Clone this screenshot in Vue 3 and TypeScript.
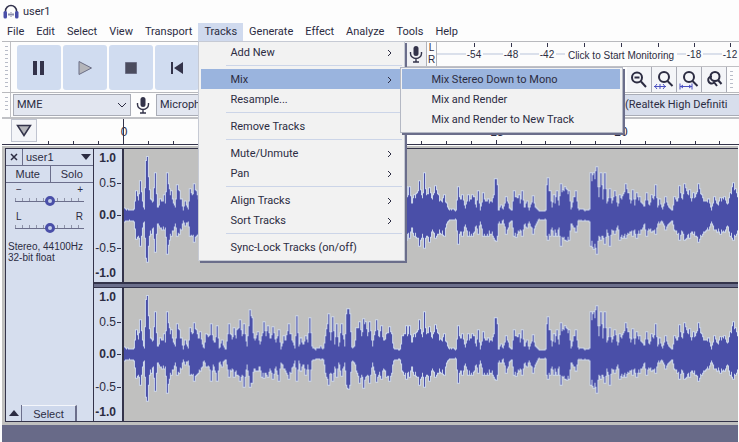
<script setup lang="ts">
import { ref } from 'vue'

interface Entry {
  label: string
  arrow?: boolean
  open?: boolean
}

const menusBefore = ['File', 'Edit', 'Select', 'View', 'Transport']
const menusAfter = ['Generate', 'Effect', 'Analyze', 'Tools', 'Help']

const trackMenu: Entry[][] = [
  [{ label: 'Add New', arrow: true }],
  [{ label: 'Mix', arrow: true, open: true }, { label: 'Resample...' }],
  [{ label: 'Remove Tracks' }],
  [{ label: 'Mute/Unmute', arrow: true }, { label: 'Pan', arrow: true }],
  [{ label: 'Align Tracks', arrow: true }, { label: 'Sort Tracks', arrow: true }],
  [{ label: 'Sync-Lock Tracks (on/off)' }],
]
const mixMenu = ['Mix Stereo Down to Mono', 'Mix and Render', 'Mix and Render to New Track']

const gain = ref(50)
const pan = ref(50)

const meterMarks = [
  { x: 37, label: '-54' },
  { x: 74, label: '-48' },
  { x: 110, label: '-42' },
  { x: 147, label: '' },
  { x: 184, label: '' },
  { x: 221, label: '' },
  { x: 257, label: '-18' },
  { x: 293, label: '-12' },
]

// Timeline: one tick per second, with a taller tick every five seconds
const secondWidth = 24.85
const labelled = [0, 15, 20]
const ticks = Array.from({ length: 28 }, (_, i) => i - 3).map((s) => ({
  x: Math.round(86 + s * secondWidth),
  major: s % 5 === 0,
  label: labelled.includes(s) ? String(s) : '',
}))

// Peak envelope: x, height above the axis, depth below the axis
const peaks = [
  124,7,6, 130,5,5, 134,6,6, 136,24,23, 138,15,20, 140,34,30, 142,14,12, 144,6,6, 146,54,42, 147,58,46, 149,25,20, 151,15,18,
  153,14,12, 155,42,36, 157,8,8, 159,10,10, 160,16,12, 162,14,14, 164,20,14, 165,12,12, 167,42,38, 169,26,24, 171,24,20, 173,12,15,
  175,8,8, 177,30,20, 179,24,18, 181,16,14, 183,5,5, 185,14,10, 188,6,6, 190,26,20, 192,20,20, 194,31,26, 196,24,20,
  198,16,18, 200,22,16, 202,10,12, 204,6,6, 206,20,12, 209,18,12, 211,30,26, 213,14,10, 215,12,16, 217,28,26, 219,6,8,
  222,14,12, 224,7,6, 226,5,5, 229,30,22, 232,15,14, 234,26,22, 236,16,16, 237,24,20, 240,34,26, 242,18,20, 244,30,32,
  247,8,10, 250,44,32, 252,36,28, 254,16,14, 256,16,16, 258,22,16, 260,10,12, 262,18,22, 264,32,23, 266,18,18, 268,28,22,
  271,16,16, 273,27,24, 276,12,12, 279,24,26, 281,5,8, 284,18,14, 286,14,16, 289,30,24, 291,20,18, 293,12,12, 295,6,6,
  297,38,26, 299,8,6, 301,16,16, 304,10,10, 306,18,20, 308,12,10, 310,36,26, 312,8,6, 315,5,5, 318,6,4, 321,8,5, 324,6,5,
  326,18,18, 329,40,30, 331,14,18, 333,37,26, 335,10,12, 337,30,22, 339,8,8, 342,30,21, 345,8,8, 347,40,30, 348,45,33,
  349,45,34, 350,40,30, 352,7,7, 355,8,8, 357,26,16, 360,32,28, 362,18,20, 364,35,33, 366,32,22, 368,18,20, 370,32,28,
  373,8,8, 377,34,27, 379,18,20, 382,28,24, 384,14,14, 387,20,22, 390,27,26, 392,20,18, 394,6,6, 398,5,5, 401,5,5,
  403,18,16, 405,20,20, 407,28,24, 408,18,18, 410,28,22, 412,12,12, 415,20,20, 418,22,22, 420,34,30, 422,20,22, 424,22,22,
  425,42,32, 427,20,20, 430,27,26, 433,16,14, 436,29,22, 439,20,18, 442,14,18, 445,20,20, 447,12,8, 449,6,5, 453,6,4,
  457,5,4, 459,28,28, 461,16,16, 463,20,20, 466,7,9, 469,20,20, 471,16,20, 473,20,20, 475,18,16, 477,8,10, 479,24,18,
  481,5,6, 484,22,20, 486,14,20, 489,16,20, 492,14,18, 495,20,22, 496,36,24, 497,36,25, 498,30,20, 499,5,8, 502,10,8,
  504,6,4, 507,18,18, 509,12,12, 511,6,6, 513,5,5, 515,24,20, 517,18,21, 520,20,16, 521,12,14, 523,24,20, 525,8,9,
  528,14,12, 530,5,6, 534,19,18, 536,8,10, 539,5,4, 543,4,4, 547,5,4, 548,30,20, 549,37,24, 551,24,20, 553,8,12,
  555,20,20, 556,12,14, 558,24,20, 560,10,12, 562,31,30, 564,25,22, 566,28,24, 568,25,25, 570,24,24, 572,6,8, 575,18,12,
  577,24,16, 579,7,5, 583,6,5, 587,5,5, 591,6,6, 592,42,30, 595,42,33, 596,36,28, 597,44,32, 598,48,38, 600,18,20,
  602,42,24, 603,30,20, 604,16,20, 606,42,28, 608,12,14, 611,26,30, 613,12,14, 616,24,18, 619,9,10, 621,20,24, 624,19,22,
  627,31,22, 630,22,18, 632,12,16, 634,25,20, 636,10,14, 638,22,22, 641,18,18, 643,12,14, 646,9,8, 648,22,20, 651,10,14,
  653,20,16, 655,16,15, 657,30,18, 659,8,8, 661,16,8, 664,6,6, 667,18,14, 670,8,8, 674,5,5, 676,18,14, 679,14,18,
  681,29,24, 684,16,16, 686,31,24, 688,24,22, 691,25,22, 693,14,16, 695,22,18, 697,18,20, 700,31,26, 703,20,20,
  706,14,16, 710,16,14, 713,5,6, 716,18,14, 719,11,16, 722,17,18, 726,18,16, 729,11,10, 732,22,20, 735,32,24, 740,18,16,
]

function buildWave(): string {
  const top: string[] = []
  const bottom: string[] = []
  for (let i = 0; i + 5 < peaks.length; i += 3) {
    const [x0, u0, d0, x1, u1, d1] = peaks.slice(i, i + 6)
    for (let x = x0; x < x1; x++) {
      const t = (x - x0) / (x1 - x0)
      const dip = x === x0 ? 1 : 0.8 + ((x * 37) % 10) / 50
      const up = Math.round((u0 + (u1 - u0) * t) * dip)
      const down = Math.round((d0 + (d1 - d0) * t) * dip)
      const px = x - 124
      top.push(`${px},${66 - up} ${px + 1},${66 - up}`)
      bottom.unshift(`${px + 1},${66 + down} ${px},${66 + down}`)
    }
  }
  return [...top, ...bottom].join(' ')
}
const wave = buildWave()
const channels = ['Left channel', 'Right channel']
const scale = ['1.0', '0.5', '0.0', '-0.5', '-1.0']
</script>

<template>
  <div class="window">
    <header class="title">
      <svg class="logo" viewBox="0 0 16 16" aria-hidden="true">
        <path d="M2.500 9V7a5.500 5.500 0 0 1 11 0v2" fill="none" stroke="#33334d" stroke-width="1.500" />
        <path d="M5 10.500h6M6 9v3M8 8v5M10 9v3" stroke="#8a8ca8" />
        <rect x="0.500" y="7" width="3.500" height="7.500" rx="1.500" fill="#4a4fa8" />
        <rect x="12" y="7" width="3.500" height="7.500" rx="1.500" fill="#4a4fa8" />
      </svg>
      <span>user1</span>
    </header>

    <nav class="menubar">
      <button v-for="m in menusBefore" :key="m" type="button">{{ m }}</button>
      <div class="holder">
        <button type="button" class="active">Tracks</button>
        <div class="menu">
          <ul v-for="(group, g) in trackMenu" :key="g">
            <li v-for="e in group" :key="e.label" :class="{ open: e.open }">
              <button type="button">
                <span>{{ e.label }}</span>
                <svg v-if="e.arrow" class="chev" viewBox="0 0 5 8" aria-hidden="true"><path d="M1 1l3 3-3 3" /></svg>
              </button>
              <div v-if="e.open" class="submenu">
                <button v-for="(m, i) in mixMenu" :key="m" type="button" :class="{ hot: i === 0 }">{{ m }}</button>
              </div>
            </li>
          </ul>
        </div>
      </div>
      <button v-for="m in menusAfter" :key="m" type="button">{{ m }}</button>
    </nav>

    <section class="tools">
      <div class="transport">
        <i class="grip"></i>
        <button type="button" aria-label="Pause">
          <svg viewBox="0 0 16 16"><path d="M2 1h4v14H2zM9 1h4v14H9z" fill="#33334a" /></svg>
        </button>
        <button type="button" aria-label="Play">
          <svg viewBox="0 0 16 16"><path d="M2 1.500v13L14.500 8z" fill="#b4b5ba" stroke="#6b6e85" /></svg>
        </button>
        <button type="button" aria-label="Stop">
          <svg viewBox="0 0 16 16"><path d="M2.500 2.500h11v11h-11z" fill="#4b4c5e" stroke="#6b6e85" /></svg>
        </button>
        <button type="button" aria-label="Skip to start">
          <svg viewBox="0 0 16 16"><path d="M2 2h2v12H2zM14 2v12L5 8z" fill="#33334a" /></svg>
        </button>
      </div>
      <div class="side">
        <div class="meter">
          <button type="button" class="mic" aria-label="Record meter">
            <svg viewBox="0 0 14 18"><rect x="4.500" y="1" width="5" height="10" rx="2.500" fill="#33334a" /><path d="M1.500 7v1.500a5.500 5 0 0 0 11 0V7M7 13.500V17M4 17h6" fill="none" stroke="#33334a" stroke-width="1.400" /></svg>
          </button>
          <div class="lr"><span>L</span><span>R</span></div>
          <svg class="scale" role="img" aria-label="Recording level">
            <line x1="0" x2="100%" y1="12" y2="12" stroke="#b9c4da" />
            <g v-for="m in meterMarks" :key="m.x">
              <rect :x="m.x" y="1" width="1" height="4" fill="#33334a" />
              <rect v-if="m.label" :x="m.x - 8" y="6" width="17" height="12" fill="#fcfcfc" />
              <text :x="m.x" y="16" text-anchor="middle">{{ m.label }}</text>
            </g>
            <rect x="128" y="6" width="112" height="12" fill="#fcfcfc" />
            <text x="184" y="17" text-anchor="middle">Click to Start Monitoring</text>
          </svg>
        </div>
        <div class="zooms">
          <button type="button" aria-label="Zoom out">
            <svg viewBox="0 0 20 20"><circle cx="8" cy="7.500" r="5" /><path d="M12 11.500l5 5.500M5.500 7.500h5" /></svg>
          </button>
          <button type="button" aria-label="Zoom to selection">
            <svg viewBox="0 0 20 20"><circle cx="10" cy="7" r="5" /><path d="M13.500 11l5 5" /><path class="blue" d="M0 16.500h12M3 14l-2 2.500L3 19M9 14l2 2.500L9 19M6 14v5" /></svg>
          </button>
          <button type="button" aria-label="Fit to width">
            <svg viewBox="0 0 20 20"><circle cx="10" cy="7" r="5" /><path d="M13.500 11l5 5" /><path class="blue" d="M1 16.500h12M1 13.500v6M13 13.500v6M4 15l-2 1.500L4 18M10 15l2 1.500L10 18" /></svg>
          </button>
          <button type="button" aria-label="Zoom toggle">
            <svg viewBox="0 0 20 20"><circle cx="11" cy="6.500" r="4.500" /><path d="M14 10l3.500 4" /><path d="M8 6.500a3.500 3.500 0 1 0 1.500 6.500M9.500 11.500l3.500 4.500" /></svg>
          </button>
          <i class="grip"></i>
        </div>
      </div>
    </section>

    <section class="devices">
      <i class="grip"></i>
      <div class="pick host">
        <select aria-label="Audio host"><option>MME</option></select>
        <svg viewBox="0 0 10 6" aria-hidden="true"><path d="M1 1l4 4 4-4" /></svg>
      </div>
      <svg class="micicon" viewBox="0 0 14 18" aria-hidden="true"><rect x="4.500" y="1" width="5" height="10" rx="2.500" fill="#33334a" /><path d="M1.500 7v1.500a5.500 5 0 0 0 11 0V7M7 13.500V17M4 17h6" fill="none" stroke="#33334a" stroke-width="1.400" /></svg>
      <div class="pick input"><select aria-label="Recording device"><option>Microph</option></select></div>
      <div class="pick output"><select aria-label="Playback device"><option>(Realtek High Definiti</option></select></div>
    </section>

    <section class="timeline">
      <button type="button" aria-label="Timeline options">
        <svg viewBox="0 0 16 13"><path d="M1.500 1.500h13L8 11.500z" fill="#b4b5ba" stroke="#33334a" stroke-width="1.500" /></svg>
      </button>
      <svg class="ruler" role="img" aria-label="Timeline in seconds">
        <g v-for="t in ticks" :key="t.x">
          <rect :x="t.x" :y="t.major ? 21 : 22" width="1" :height="t.major ? 4 : 3" fill="#33334a" />
          <text v-if="t.label" :x="t.x + 1" y="17" text-anchor="middle">{{ t.label }}</text>
        </g>
        <rect x="86" y="0" width="1" height="25" fill="#33334a" />
      </svg>
    </section>

    <main class="track">
      <aside class="panel">
        <div class="name">
          <button type="button" class="close" aria-label="Close track"><svg viewBox="0 0 8 8"><path d="M1 1l6 6M7 1L1 7" /></svg></button>
          <button type="button" class="label">user1<i class="down"></i></button>
        </div>
        <div class="pair"><button type="button">Mute</button><button type="button">Solo</button></div>
        <label class="slide"><span class="ends"><b>−</b><b>+</b></span><input v-model="gain" type="range" aria-label="Gain" /></label>
        <label class="slide"><span class="ends"><b>L</b><b>R</b></span><input v-model="pan" type="range" aria-label="Pan" /></label>
        <p>Stereo, 44100Hz<br />32-bit float</p>
        <div class="foot">
          <button type="button" class="fold" aria-label="Collapse"><i class="up"></i></button>
          <button type="button" class="sel">Select</button>
        </div>
      </aside>
      <div class="channels">
        <div v-for="c in channels" :key="c" class="channel">
          <div class="vscale"><span v-for="s in scale" :key="s" :class="{ mark: !s.includes('1'), half: s.includes('5') }">{{ s }}</span></div>
          <svg class="wave" viewBox="0 0 616 132" preserveAspectRatio="none" role="img" :aria-label="c">
            <polygon :points="wave" fill="none" stroke="#ccd6ea" stroke-width="2" />
            <polygon :points="wave" fill="#4a4fa8" />
          </svg>
        </div>
      </div>
    </main>
    <footer></footer>
  </div>
</template>

<style>
body {
  margin: 0;
  background: #fdfdfd;
}
</style>

<style scoped>
.window {
  display: flex;
  flex-direction: column;
  min-height: 100vh;
  overflow: hidden;
  color: #2c2c42;
  font: 11px/20px Roboto, "Open Sans", sans-serif;
}
* {
  box-sizing: border-box;
}
button,
select {
  margin: 0;
  padding: 0;
  border: 0;
  border-radius: 0;
  background: none;
  color: inherit;
  font: inherit;
}
svg {
  display: block;
  flex: none;
}
.title {
  display: flex;
  align-items: center;
  gap: 4px;
  height: 23px;
  padding-left: 3px;
}
.logo {
  width: 16px;
  height: 16px;
}
.menubar {
  display: flex;
  height: 18px;
  padding-left: 1px;
  line-height: 18px;
}
.menubar > button,
.active {
  padding: 0 6px;
}
.holder {
  position: relative;
}
.active {
  background: #d0daee;
}
.menu {
  position: absolute;
  z-index: 2;
  top: 18px;
  left: 0;
  width: 207px;
  padding: 0 2px 3px;
  border: 1px solid #c6cad4;
  background: #f2f2f2;
  box-shadow: 2px 2px 0 #6b6e8b;
}
.menu ul {
  margin: 0;
  padding: 0;
  list-style: none;
}
.menu ul + ul {
  margin-top: 3px;
  padding-top: 3px;
  border-top: 1px solid #ccd5e8;
  border-image: linear-gradient(90deg, transparent 26px, #ccd5e8 26px) 1;
}
.menu li {
  position: relative;
}
.menu li > button {
  display: flex;
  align-items: center;
  justify-content: space-between;
  width: 100%;
  height: 20px;
  padding: 1px 10px 0 29px;
}
.open > button,
.menu .hot {
  background: #9ab4de;
}
.chev {
  width: 5px;
  height: 8px;
  fill: none;
  stroke: #2c2c42;
}
.submenu {
  position: absolute;
  top: -2px;
  left: 199px;
  display: flex;
  flex-direction: column;
  width: 223px;
  padding: 1px 2px 3px 1px;
  border: 1px solid #b4b8c4;
  background: #f2f2f2;
  box-shadow: 2px 2px 0 #6b6e8b;
}
.submenu button {
  height: 20px;
  padding: 1px 0 0 29px;
  text-align: left;
}
.tools {
  display: grid;
  grid-template-columns: 403px 1fr;
  height: 52px;
  margin-left: 2px;
  border-top: 1px solid #b8b9bd;
  border-bottom: 1px solid #b8b9bd;
}
.grip {
  flex: none;
  width: 9px;
  border-right: 1px solid #c0c0c4;
  background: repeating-linear-gradient(#b8bcc8 0 1px, transparent 1px 4px) 50% 50% / 3px calc(100% - 8px) no-repeat;
}
.transport {
  display: flex;
  align-items: stretch;
  gap: 2px;
}
.transport .grip {
  margin-right: 4px;
}
.transport button {
  display: grid;
  place-items: center;
  width: 44px;
  margin: 3px 0 2px;
  border-radius: 3px;
  background: #d0dcf0;
}
.transport svg {
  width: 16px;
  height: 16px;
}
.side {
  display: grid;
  grid-template-rows: 25px 25px;
  min-width: 0;
}
.meter {
  display: flex;
  border-bottom: 1px solid #c0c0c4;
  background: #fcfcfc;
}
.mic {
  display: grid;
  place-items: center;
  width: 22px;
  border-right: 1px solid #b0b2ba;
  background: #f0f1f4;
}
.mic svg,
.micicon {
  width: 14px;
  height: 18px;
}
.lr {
  display: flex;
  flex-direction: column;
  width: 10px;
  border-right: 1px solid #b0b2ba;
  font: 10px/12px "Liberation Sans", sans-serif;
  text-align: center;
}
.scale {
  flex: 1;
  width: 0;
  height: 24px;
  overflow: hidden;
  fill: #2c2c42;
  font: 10px "Liberation Sans", sans-serif;
}
.zooms {
  display: flex;
  justify-content: flex-end;
  padding-right: 3px;
}
.zooms button {
  display: grid;
  place-items: center;
  width: 25px;
  border-right: 1px solid #a8aab4;
  background: #f4f5f8;
}
.zooms svg {
  width: 20px;
  height: 20px;
  fill: none;
  stroke: #2c2c42;
  stroke-width: 2;
}
.zooms .blue {
  stroke: #4a4fc0;
  stroke-width: 1;
}
.zooms .grip {
  border: 0;
}
.devices {
  display: flex;
  align-items: center;
  height: 26px;
  margin-left: 2px;
  border-bottom: 2px solid #c0c1c5;
}
.devices .grip {
  align-self: stretch;
}
.pick {
  position: relative;
  height: 22px;
  border: 1px solid #a9acb6;
  background: #e2e6f0;
}
.pick select {
  display: block;
  width: 100%;
  height: 20px;
  padding: 0 3px;
  appearance: none;
  line-height: 20px;
}
.pick svg {
  position: absolute;
  top: 7px;
  right: 3px;
  width: 10px;
  height: 6px;
  fill: none;
  stroke: #2c2c42;
  pointer-events: none;
}
.host {
  width: 118px;
  margin-left: 2px;
}
.micicon {
  margin: 0 6px 0 5px;
}
.input {
  width: 120px;
}
.output {
  width: 118px;
  margin-left: auto;
  border-right: 0;
  background: #d8deec;
}
.timeline {
  display: flex;
  height: 26px;
  margin-left: 2px;
  border-bottom: 1px solid #33334a;
}
.timeline button {
  display: grid;
  place-items: center;
  width: 26px;
  margin: 0 0 2px 9px;
  border: 1px solid #c0c4d0;
  background: #f4f5f8;
}
.timeline button svg {
  width: 16px;
  height: 13px;
}
.ruler {
  flex: 1;
  width: 0;
  height: 25px;
  overflow: hidden;
  fill: #2c2c42;
  font: 12px "Liberation Sans", sans-serif;
}
.track {
  display: flex;
  flex: 1;
  margin: 1px 1px 0 2px;
  padding: 2px 0 3px 3px;
  background: #c0c0bf;
  font-family: "Liberation Sans", sans-serif;
  font-size: 11px;
  line-height: 16px;
}
.panel {
  display: flex;
  flex-direction: column;
  width: 89px;
  border: 1px solid #33334a;
  background: #d6deee;
}
.name {
  display: flex;
  height: 17px;
  border-bottom: 1px solid #6b6e8b;
}
.close {
  display: grid;
  place-items: center;
  width: 17px;
  border-right: 1px solid #6b6e8b;
}
.close svg {
  width: 8px;
  height: 8px;
  stroke: #2c2c42;
  stroke-width: 1.5;
}
.label {
  display: flex;
  flex: 1;
  align-items: center;
  justify-content: space-between;
  padding: 0 2px 0 3px;
}
.down,
.up {
  border: 5px solid transparent;
  border-top: 6px solid #2c2c42;
  border-bottom: 0;
}
.up {
  border-top: 0;
  border-bottom: 6px solid #2c2c42;
}
.pair {
  display: grid;
  grid-template-columns: 1fr 1fr;
  height: 17px;
  border-bottom: 1px solid #6b6e8b;
}
.pair button + button {
  border-left: 1px solid #6b6e8b;
}
.slide {
  display: block;
  height: 27px;
  padding: 1px 9px 0;
}
.ends {
  display: flex;
  justify-content: space-between;
  padding: 0 1px;
  font-size: 10px;
  line-height: 12px;
}
.ends b {
  font-weight: 400;
}
.slide input {
  display: block;
  width: 100%;
  height: 10px;
  margin: 0;
  appearance: none;
  background:
    linear-gradient(#6b6e8b, #6b6e8b) 0 5px / 100% 1px no-repeat,
    repeating-linear-gradient(90deg, #8f93a8 0 1px, transparent 1px 7px) 0 2px / 100% 3px no-repeat;
}
.slide input::-webkit-slider-thumb {
  width: 10px;
  height: 10px;
  appearance: none;
  border: 3px solid #4a4fa8;
  border-radius: 50%;
  background: #c5d0ea;
}
.panel p {
  margin: 4px 0 0 2px;
  font-size: 10px;
  line-height: 11px;
  white-space: nowrap;
}
.foot {
  display: flex;
  height: 16px;
  margin-top: auto;
}
.fold {
  display: grid;
  place-items: center;
  width: 16px;
  border-right: 1px solid #6b6e8b;
}
.sel {
  width: 55px;
  border-top: 1px solid #f4f6fb;
  border-right: 2px solid #6b6e8b;
  background: #ced8ec;
}
.channels {
  display: flex;
  flex: 1;
  flex-direction: column;
  gap: 3px;
  min-width: 0;
  border-top: 1px solid #33334a;
  border-bottom: 1px solid #33334a;
  background: #6b6e8b;
}
.channel {
  display: flex;
  flex: 1;
  min-height: 0;
  border-bottom: 2px solid #33334a;
}
.channel + .channel {
  border-top: 1px solid #33334a;
  border-bottom: 0;
}
.vscale {
  display: grid;
  grid-template-rows: 18fr 32fr 32fr 32fr 18fr;
  align-items: center;
  width: 30px;
  padding-right: 6px;
  border-right: 2px solid #33334a;
  background: #d6deee;
  font-size: 12px;
  font-weight: 700;
  text-align: right;
}
.vscale span {
  position: relative;
}
.vscale .half {
  font-weight: 400;
}
.mark::after {
  position: absolute;
  top: 8px;
  right: -5px;
  width: 4px;
  height: 1px;
  background: #33334a;
  content: "";
}
.wave {
  flex: 1;
  width: 0;
  height: 100%;
  background: #c0c0bf;
}
footer {
  height: 17px;
  margin: 0 1px 0 2px;
  background: #686a88;
}
</style>
